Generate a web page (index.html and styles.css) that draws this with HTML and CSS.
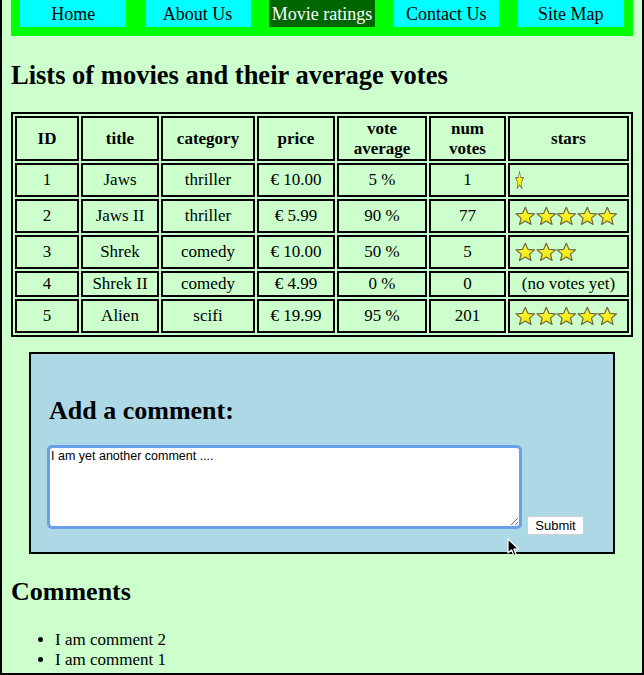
FILE: index.html
```html
<!DOCTYPE html>
<html>
<head>
<meta charset="utf-8">
<title>Movie ratings</title>
<link rel="stylesheet" href="styles.css">
</head>
<body>
<svg class="defs" width="0" height="0" aria-hidden="true">
  <defs>
    <linearGradient id="starfill" x1="0" y1="0" x2="0" y2="1">
      <stop offset="0" stop-color="#ffff40"/>
      <stop offset="1" stop-color="#f2e200"/>
    </linearGradient>
    <symbol id="star" viewBox="0 0 20 22" preserveAspectRatio="none">
      <path d="M10 2.3 L12.53 8.32 L19.03 8.86 L14.09 13.13 L15.59 19.49 L10 16.1 L4.41 19.49 L5.91 13.13 L0.97 8.86 L7.47 8.32 Z" fill="url(#starfill)" stroke="#6e6a4a" stroke-width="1.2" stroke-linejoin="round"/>
    </symbol>
  </defs>
</svg>
<div class="frame">
  <nav class="nav">
    <a class="nav-item" href="#">Home</a>
    <a class="nav-item" href="#">About Us</a>
    <a class="nav-item active" href="#">Movie ratings</a>
    <a class="nav-item" href="#">Contact Us</a>
    <a class="nav-item" href="#">Site Map</a>
  </nav>

  <h2 class="title">Lists of movies and their average votes</h2>

  <table class="movies">
    <thead>
      <tr>
        <th class="c-id">ID</th>
        <th class="c-title">title</th>
        <th class="c-cat">category</th>
        <th class="c-price">price</th>
        <th class="c-avg">vote average</th>
        <th class="c-num">num votes</th>
        <th class="c-stars">stars</th>
      </tr>
    </thead>
    <tbody>
      <tr>
        <td>1</td><td>Jaws</td><td>thriller</td><td>€ 10.00</td><td>5 %</td><td>1</td>
        <td class="stars"><svg class="star star-part"><use href="#star"/></svg></td>
      </tr>
      <tr>
        <td>2</td><td>Jaws II</td><td>thriller</td><td>€ 5.99</td><td>90 %</td><td>77</td>
        <td class="stars"><svg class="star"><use href="#star"/></svg><svg class="star"><use href="#star"/></svg><svg class="star"><use href="#star"/></svg><svg class="star"><use href="#star"/></svg><svg class="star"><use href="#star"/></svg></td>
      </tr>
      <tr>
        <td>3</td><td>Shrek</td><td>comedy</td><td>€ 10.00</td><td>50 %</td><td>5</td>
        <td class="stars"><svg class="star"><use href="#star"/></svg><svg class="star"><use href="#star"/></svg><svg class="star"><use href="#star"/></svg></td>
      </tr>
      <tr>
        <td>4</td><td>Shrek II</td><td>comedy</td><td>€ 4.99</td><td>0 %</td><td>0</td>
        <td>(no votes yet)</td>
      </tr>
      <tr>
        <td>5</td><td>Alien</td><td>scifi</td><td>€ 19.99</td><td>95 %</td><td>201</td>
        <td class="stars"><svg class="star"><use href="#star"/></svg><svg class="star"><use href="#star"/></svg><svg class="star"><use href="#star"/></svg><svg class="star"><use href="#star"/></svg><svg class="star"><use href="#star"/></svg></td>
      </tr>
    </tbody>
  </table>

  <form class="comment-form">
    <h2 class="form-title">Add a comment:</h2>
    <div class="form-row"><textarea class="comment-input">I am yet another comment ....</textarea> <button type="button" class="submit">Submit</button></div>
  </form>

  <h2 class="comments-title">Comments</h2>
  <ul class="comments">
    <li>I am comment 2</li>
    <li>I am comment 1</li>
  </ul>

  <svg class="cursor" width="14" height="20" viewBox="0 0 14 20"><path d="M1 1 L1 15 L4.5 11.8 L7 17.5 L9.2 16.6 L6.8 11 L11.5 11 Z" fill="#000" stroke="#fff" stroke-width="1.2" stroke-linejoin="round"/></svg>
</div>
</body>
</html>
```

FILE: styles.css
```css
html, body {
  margin: 0;
  padding: 0;
  background: #ffffff;
}

.defs {
  position: absolute;
  width: 0;
  height: 0;
}

.frame {
  position: relative;
  box-sizing: border-box;
  min-height: 100vh;
  background: #ccffcc;
  border: 2px solid #000;
  border-top: none;
  padding: 0 9px 1px 9px;
  font-family: "Liberation Serif", "Times New Roman", serif;
  font-size: 17px;
  color: #000;
}

.nav {
  display: flex;
  justify-content: space-around;
  background: #00ff00;
  padding: 0 0 9px 0;
}

.nav-item {
  width: 106px;
  height: 27px;
  line-height: 29px;
  text-align: center;
  background: #00ffff;
  color: #000;
  text-decoration: none;
  font-size: 18px;
  overflow: hidden;
}

.nav-item.active {
  background: #006600;
  color: #fff;
}

.title {
  font-size: 26.5px;
  font-weight: bold;
  margin: 24px 0 21px 0;
}

.movies {
  width: 100%;
  border: 2px solid #000;
  border-spacing: 2px;
  table-layout: fixed;
  font-size: 17px;
  line-height: 19.5px;
}

.movies th, .movies td {
  box-sizing: border-box;
  border: 2px solid #000;
  padding: 1px;
  text-align: center;
  vertical-align: middle;
}

.movies th { font-weight: bold; }

.c-id { width: 64px; }
.c-title { width: 78px; }
.c-cat { width: 94px; }
.c-price { width: 78px; }
.c-avg { width: 90px; }
.c-num { width: 77px; }
.c-stars { width: 121px; }

.movies td.stars {
  text-align: left;
  padding-left: 5px;
  font-size: 0;
  line-height: 0;
  height: 34px;
}

.star {
  display: inline-block;
  width: 20.6px;
  height: 22px;
  vertical-align: middle;
}

.star-part {
  width: 9px;
}

.comment-form {
  margin: 15px 18px 0 18px;
  padding: 18px 18px 17px 18px;
  background: #add8e6;
  border: 2px solid #000;
}

.form-title {
  font-size: 26px;
  margin: 24px 0 21px 0;
}

.form-row {
  line-height: 18px;
}

.comment-input {
  box-sizing: border-box;
  width: 471px;
  height: 80px;
  margin: 0;
  padding: 1px 1px;
  font-family: "Liberation Sans", Arial, sans-serif;
  font-size: 12.5px;
  border: 1px solid #7aa7e0;
  outline: 3px solid #6aa0ea;
  outline-offset: -1px;
  border-radius: 3px;
  background: #fff;
  resize: both;
  vertical-align: baseline;
}

.submit {
  font-family: "Liberation Sans", Arial, sans-serif;
  font-size: 13px;
  background: #fff;
  border: 1px solid #cfcfcf;
  border-radius: 2px;
  padding: 1px 7px;
  height: 19px;
  margin-left: 3px;
  color: #000;
  vertical-align: -3px;
}

.comments-title {
  font-size: 26px;
  margin: 23px 0 23px 0;
}

.comments {
  margin: 0;
  padding-left: 44px;
  font-size: 17px;
  line-height: 20px;
}

.cursor {
  position: absolute;
  left: 505px;
  top: 538px;
}
```
